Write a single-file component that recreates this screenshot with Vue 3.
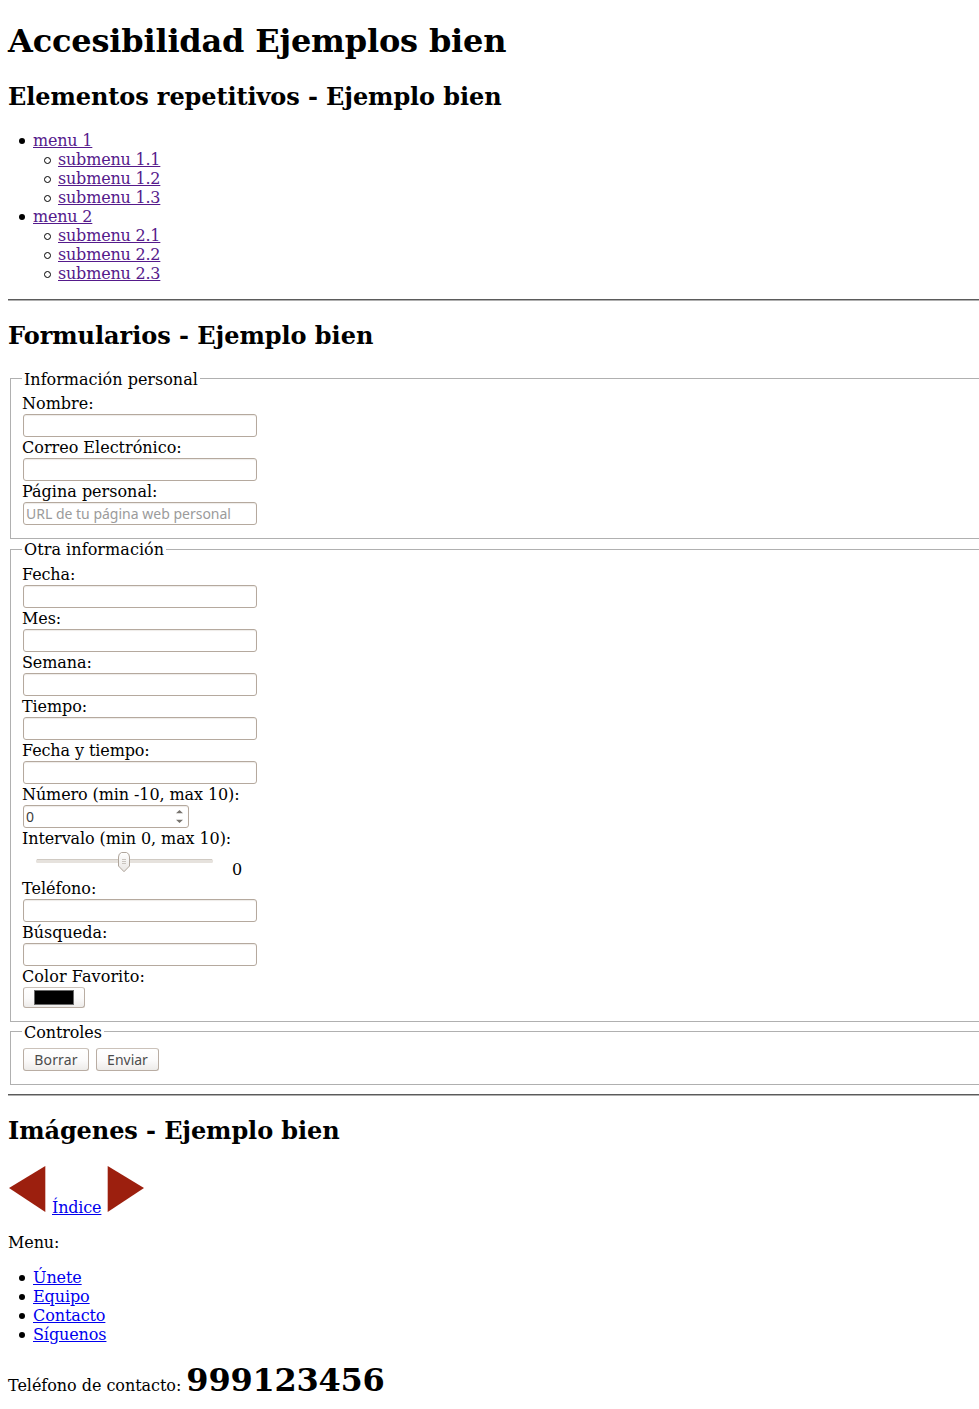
<script setup>
const menus = [
  { name: 'menu 1', items: ['submenu 1.1', 'submenu 1.2', 'submenu 1.3'] },
  { name: 'menu 2', items: ['submenu 2.1', 'submenu 2.2', 'submenu 2.3'] },
]
const personal = [
  { label: 'Nombre:', id: 'nombre' },
  { label: 'Correo Electrónico:', id: 'correo' },
  { label: 'Página personal:', id: 'pagina', placeholder: 'URL de tu página web personal' },
]
const dates = ['Fecha:', 'Mes:', 'Semana:', 'Tiempo:', 'Fecha y tiempo:']
const contact = ['Teléfono:', 'Búsqueda:']
const links = ['Únete', 'Equipo', 'Contacto', 'Síguenos']
</script>

<template>
  <div class="viewport">
    <main class="page">
      <h1>Accesibilidad Ejemplos bien</h1>
      <h2>Elementos repetitivos - Ejemplo bien</h2>
      <ul class="visited">
        <li v-for="m in menus" :key="m.name">
          <a href="#">{{ m.name }}</a>
          <ul>
            <li v-for="s in m.items" :key="s"><a href="#">{{ s }}</a></li>
          </ul>
        </li>
      </ul>
      <hr />
      <h2 class="form-title">Formularios - Ejemplo bien</h2>
      <form>
        <fieldset>
          <legend>Información personal</legend>
          <div v-for="f in personal" :key="f.id">
            <label :for="f.id">{{ f.label }}</label>
            <input :id="f.id" class="field" type="text" :placeholder="f.placeholder" />
          </div>
        </fieldset>
        <fieldset class="other">
          <legend>Otra información</legend>
          <div v-for="d in dates" :key="d" class="tight">
            <label>{{ d }}</label>
            <input class="field" type="text" />
          </div>
          <label class="tight">Número (min -10, max 10):</label>
          <div class="field number">
            <span>0</span>
            <svg width="7" height="13" viewBox="0 0 7 13"><path d="M0 3.2 3.5 0 7 3.2ZM0 9.8 3.5 13 7 9.8Z" fill="#77736e" /></svg>
          </div>
          <label class="tight">Intervalo (min 0, max 10):</label>
          <div class="range">
            <svg width="178" height="21" viewBox="0 0 178 21">
              <defs>
                <linearGradient id="thumb" x1="0" y1="0" x2="0" y2="1">
                  <stop offset="0" stop-color="#fff" />
                  <stop offset="1" stop-color="#e8e5e2" />
                </linearGradient>
              </defs>
              <rect x="0" y="7" width="177" height="4" rx="1.5" fill="#e6e2dd" />
              <path d="M1 7.5H176" stroke="#d0cac3" />
              <path d="M85.500 .5H90.500Q93.500 1.500 93.500 5V14L88 19.700 82.500 14V5Q82.500 1.500 85.500 .5Z" fill="url(#thumb)" stroke="#afa59b" />
              <path d="M86 7.500H90M86 9.500H90M86 11.500H90" stroke="#c9c4be" />
            </svg>
            <output>0</output>
          </div>
          <div v-for="c in contact" :key="c">
            <label>{{ c }}</label>
            <input class="field" type="text" />
          </div>
          <label class="loose">Color Favorito:</label>
          <button type="button" class="btn color" aria-label="Color"><span class="swatch"></span></button>
        </fieldset>
        <fieldset class="controls">
          <legend>Controles</legend>
          <div class="actions">
            <button type="button" class="btn clear">Borrar</button>
            <button type="button" class="btn send">Enviar</button>
          </div>
        </fieldset>
      </form>
      <hr class="after-form" />
      <h2 class="images-title">Imágenes - Ejemplo bien</h2>
      <div class="pager">
        <svg width="39" height="48" viewBox="0 0 39 48"><path d="M1 23 37.300 1V47Z" fill="#9c1f0e" /></svg>
        <a href="#">Índice</a>
        <svg width="39" height="48" viewBox="0 0 39 48"><path d="M38 23 1.700 1V47Z" fill="#9c1f0e" /></svg>
      </div>
      <p class="menu-label">Menu:</p>
      <ul class="links">
        <li v-for="l in links" :key="l"><a href="#">{{ l }}</a></li>
      </ul>
      <p class="phone">Teléfono de contacto: <strong>999123456</strong></p>
    </main>
  </div>
</template>

<style>
html, body { margin: 0; background: #fff; }
</style>

<style scoped>
.viewport {
  height: 1409px;
  overflow: hidden;
  font: 16px/19px "DejaVu Serif", serif;
  color: #000;
}
.page { width: 1100px; margin-left: 8px; display: flow-root; }
h1 { font-size: 32px; line-height: 38px; margin: 22px 0 0; letter-spacing: -0.18px; }
h2 { font-size: 24px; line-height: 28px; margin: 20px 0; letter-spacing: -0.09px; }
h1 + h2 { margin: 23px 0 20px; }
.form-title { margin: 21px 0 20px; letter-spacing: -0.04px; }
.images-title { margin: 21px 0 19px; }
ul { margin: 0 0 16px; padding-left: 25px; list-style: none; }
ul ul { margin: 0; }
li { position: relative; }
li::before {
  content: "";
  position: absolute;
  left: -14px;
  top: 7px;
  box-sizing: border-box;
  width: 6px;
  height: 6px;
  border-radius: 50%;
  background: #000;
}
li li::before { width: 7px; height: 7px; border: 1px solid #000; background: none; }
a { color: #0000ee; text-decoration: underline; }
.visited a { color: #551a8b; letter-spacing: -0.2px; }
.links a, .menu-label { letter-spacing: -0.1px; }
.tight { letter-spacing: -0.1px; }
.loose { letter-spacing: 0.08px; }
hr { margin: 0; height: 1px; border: 0; border-top: 1px solid #5b5b5b; background: #b0b0b0; }
fieldset {
  margin: 0 2px 2px;
  padding: 7px 11px 12px;
  border: 1px solid #b0b0b0;
  min-width: 0;
}
fieldset.other { margin-bottom: 1px; }
fieldset.controls { margin-bottom: 9px; }
legend { height: 17px; line-height: 19px; padding: 0 2px; white-space: nowrap; }
.other legend { line-height: 18px; letter-spacing: 0.06px; }
.controls legend { letter-spacing: -0.1px; }
label { display: block; height: 19px; }
.field {
  display: block;
  box-sizing: border-box;
  width: 234px;
  height: 23px;
  margin: 1px;
  padding: 0 2px;
  border: 1px solid #b5a99e;
  border-radius: 3px;
  box-shadow: inset 0 1px 1px #eeebe8;
  background: #fff;
  font: 14px/21px "Noto Sans", sans-serif;
  color: #3c3c3c;
  outline: 0;
}
.field::placeholder { color: #9b9b9b; opacity: 1; }
.field.number {
  display: flex;
  align-items: center;
  justify-content: space-between;
  width: 166px;
  padding-right: 5px;
}
.range { display: flex; height: 31px; padding-left: 14px; box-sizing: border-box; }
.range svg { margin-top: 4px; }
.range output { margin: 12px 0 0 18px; }
.btn {
  box-sizing: border-box;
  height: 23px;
  padding: 0;
  border: 1px solid #b9ada3;
  border-top-color: #cbc2ba;
  border-radius: 3px;
  background: linear-gradient(#fff, #fbfafa 55%, #edebe9);
  font: 14px/20px "Noto Sans", sans-serif;
  color: #4c4c4c;
}
.color { display: flex; align-items: center; justify-content: center; width: 62px; height: 21px; margin: 1px; }
.swatch { width: 38px; height: 13px; border: 1px solid #6a6a6a; background: #000; }
.actions { display: flex; gap: 7px; padding: 1px; }
.clear { width: 66px; letter-spacing: 0.15px; }
.send { width: 63px; }
.pager { display: flex; gap: 5px; height: 53px; padding-top: 1px; }
.pager svg { display: block; }
.pager a { margin-top: 33px; height: 19px; letter-spacing: -0.17px; }
.menu-label { margin: 15px 0 16px; }
.phone { margin: 17px 0 0; line-height: 38px; letter-spacing: -0.04px; }
.phone strong { font-size: 32px; letter-spacing: -0.25px; }
</style>
